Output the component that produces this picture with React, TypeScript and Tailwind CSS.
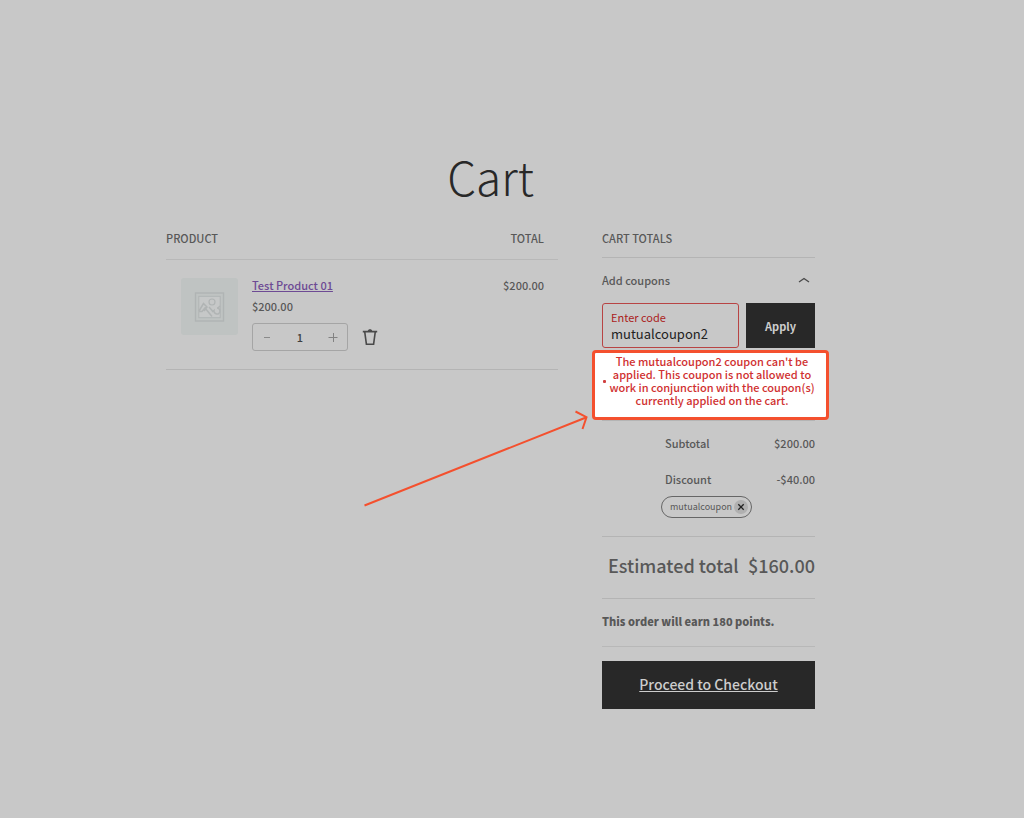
import { useState } from "react";

function ProductPlaceholder() {
  return (
    <svg viewBox="0 0 57 57" className="block size-[57px]" role="img" aria-label="Product placeholder">
      <rect width="57" height="57" rx="3" fill="#bfc3c2" />
      <g fill="none" stroke="#b0b4b4">
        <rect x="14.5" y="15" width="28" height="28" strokeWidth="1.4" />
        <rect x="17.8" y="18.3" width="21.4" height="21.4" strokeWidth="1" fill="#c6c8c8" />
        <circle cx="31" cy="24" r="3" strokeWidth="1.2" />
        <path d="M18 33l4.5-7.5 3.5 3.5-3 4M18 33.500h3l3-3.500 7 8.500M28 29l3.500 4M31 34l2-1.500a3 3 0 1 0 3-2.500M37 30l2-2" strokeWidth="1.5" />
      </g>
    </svg>
  );
}

function TrashIcon() {
  return (
    <svg viewBox="0 0 16 18" className="block h-[18px] w-4" fill="none" stroke="#4a4a4a" strokeWidth="1.6" aria-hidden="true">
      <path d="M.8 3.600h14.400M2.700 3.600l1.700 12.600h7.200l1.700-12.600" />
      <path d="M5.800 3.200c0-2.600 4.400-2.600 4.400 0z" fill="#4a4a4a" stroke="none" />
    </svg>
  );
}

function Arrow() {
  return (
    <svg
      viewBox="0 0 232 100"
      className="pointer-events-none absolute top-[56px] right-full h-[100px] w-[232px]"
      fill="none"
      stroke="#f4502e"
      strokeWidth="2"
      aria-hidden="true"
    >
      <path d="M1.500 96.500L223 8.500M212.500 2.500L223.500 8.200L219.500 20" />
    </svg>
  );
}

function CartItems() {
  const [quantity, setQuantity] = useState(1);
  return (
    <table className="w-full border-collapse self-start text-left">
      <thead>
        <tr className="border-b border-[#b8b8b8] leading-7">
          <th colSpan={2} className="pb-[7px] font-medium">PRODUCT</th>
          <th className="pr-[14px] pb-[7px] text-right font-medium">TOTAL</th>
        </tr>
      </thead>
      <tbody>
        <tr className="border-b border-[#b4b4b4] align-top">
          <td className="w-[86px] pt-[18px] pl-[15px]">
            <ProductPlaceholder />
          </td>
          <td className="pt-[17px] pb-[18px]">
            <a href="#product" className="block w-fit text-[#6d4a94] underline">Test Product 01</a>
            <p className="mt-[5px]">$200.00</p>
            <div className="mt-[9px] flex items-center gap-[14px]">
              <div className="flex h-7 w-24 items-center rounded-[3px] border border-[#a5a5a5]">
                <button
                  type="button"
                  aria-label="Reduce quantity"
                  className="flex h-full w-7 items-center justify-center"
                  onClick={() => setQuantity(Math.max(1, quantity - 1))}
                >
                  <svg viewBox="0 0 10 10" className="size-[10px]" stroke="#8a8a8a" aria-hidden="true">
                    <path d="M2 5.500h6" />
                  </svg>
                </button>
                <input
                  aria-label="Quantity"
                  className="min-w-0 flex-1 text-center text-[#3f3f3f] outline-none"
                  value={quantity}
                  onChange={(e) => setQuantity(Number(e.target.value) || 1)}
                />
                <button
                  type="button"
                  aria-label="Increase quantity"
                  className="flex h-full w-7 items-center justify-center"
                  onClick={() => setQuantity(quantity + 1)}
                >
                  <svg viewBox="0 0 10 10" className="size-[10px]" stroke="#828282" aria-hidden="true">
                    <path d="M.5 5.500h9M5.500 1v9" />
                  </svg>
                </button>
              </div>
              <button type="button" aria-label="Remove item">
                <TrashIcon />
              </button>
            </div>
          </td>
          <td className="pt-[17px] pr-[14px] text-right">$200.00</td>
        </tr>
      </tbody>
    </table>
  );
}

function CartTotals() {
  const [code, setCode] = useState("mutualcoupon2");
  return (
    <section>
      <h2 className="border-b border-[#b4b4b4] pb-[5px] leading-7 font-medium">CART TOTALS</h2>
      <button type="button" className="flex h-[45px] w-full items-center justify-between pr-[5px] pb-[2px]">
        Add coupons
        <svg viewBox="0 0 12 8" className="h-2 w-3" fill="none" stroke="#4a4a4a" strokeWidth="1.4" aria-hidden="true">
          <path d="M1 6L6 2.500L11 6" />
        </svg>
      </button>
      <form className="flex h-[45px] gap-[7px]" onSubmit={(e) => e.preventDefault()}>
        <div className="flex min-w-0 flex-1 flex-col rounded-[3px] border border-[#b84444] px-2 pt-[5px]">
          <label htmlFor="coupon" className="font-normal text-[#ab1c1c]">Enter code</label>
          <input
            id="coupon"
            className="h-[18px] w-full text-[13px] leading-[18px] font-normal text-[#222222] outline-none"
            value={code}
            onChange={(e) => setCode(e.target.value)}
          />
        </div>
        <button type="submit" className="w-[69px] bg-[#282828] font-bold text-[#cdcdcd]">Apply</button>
      </form>
      <div className="relative mt-[2px] -mr-[14px] -ml-[10px] h-[70px] rounded-[4px] border-[3px] border-[#f4502e] bg-white pt-[2px]">
        <ul role="alert" className="flex items-center gap-[3px] pr-[11px] pl-2">
          <li aria-hidden="true" className="size-[3px] shrink-0 rounded-[1px] bg-[#d04040]" />
          <li className="flex-1 text-center leading-[13px] text-[#d03030]">
            The mutualcoupon2 coupon can't be applied. This coupon is not allowed to work in conjunction with the coupon(s) currently applied on the cart.
          </li>
        </ul>
        <Arrow />
      </div>
      <div className="border-y border-[#b4b4b4] pt-[14px] pb-[18px] pl-[63px]">
        <div className="flex justify-between">
          <span>Subtotal</span>
          <span>$200.00</span>
        </div>
        <div className="mt-5 flex justify-between">
          <span>Discount</span>
          <span>-$40.00</span>
        </div>
        <div className="mt-[9px] -ml-1 flex h-[22px] w-[91px] items-center justify-between rounded-full border border-[#666666] pr-[3px] pl-2 text-[9px] font-normal">
          mutualcoupon
          <button type="button" aria-label="Remove coupon" className="flex size-[14px] items-center justify-center rounded-full bg-[#b0b0b0]">
            <svg viewBox="0 0 8 8" className="size-2" stroke="#222222" strokeWidth="1.3" aria-hidden="true">
              <path d="M1.300 1.300l5.400 5.400M6.700 1.300l-5.400 5.400" />
            </svg>
          </button>
        </div>
      </div>
      <div className="flex h-[62px] items-center justify-between border-b border-[#b4b4b4] pb-[6px] pl-[6px] text-lg whitespace-nowrap">
        <span>Estimated total</span>
        <span>$160.00</span>
      </div>
      <p className="flex h-12 items-center border-b border-[#b8b8b8] pb-[3px] font-black whitespace-nowrap">This order will earn 180 points.</p>
      <a href="#checkout" className="mt-[14px] flex h-12 items-center justify-center bg-[#282828] pb-[2px] text-sm text-[#cdcdcd] underline">
        Proceed to Checkout
      </a>
    </section>
  );
}

export default function App() {
  return (
    <div className="min-h-screen bg-[#c8c8c8] pt-[144px] pr-[43px] pb-16 font-['Noto_Sans_CJK_SC',sans-serif] text-[11px] leading-4 font-medium text-[#585858]">
      <main className="mx-auto max-w-[649px]">
        <h1 className="text-center text-[46px] leading-[64px] font-light text-[#282828]">Cart</h1>
        <div className="mt-4 grid grid-cols-[minmax(0,1fr)_213px] gap-11">
          <CartItems />
          <CartTotals />
        </div>
      </main>
    </div>
  );
}
